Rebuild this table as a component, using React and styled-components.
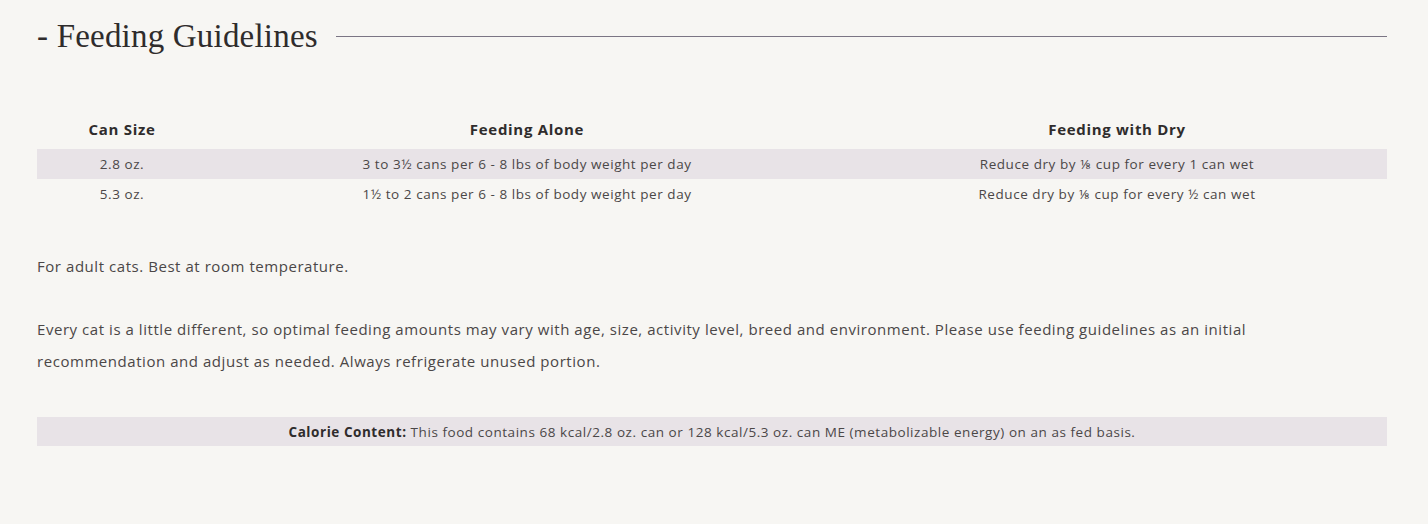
import styled, { createGlobalStyle } from 'styled-components';

const GlobalStyle = createGlobalStyle`
  body {
    margin: 0;
    background: #f7f6f3;
  }
`;

const Section = styled.section`
  box-sizing: border-box;
  width: 1428px;
  min-height: 524px;
  padding: 14px 41px 0 37px;
  background: #f7f6f3;
  font-family: "Open Sans", "Noto Sans", sans-serif;
  letter-spacing: 0.55px;
  color: #4b4747;
`;

const Heading = styled.div`
  display: flex;
  align-items: center;
  gap: 18px;
  height: 44px;

  h2 {
    margin: 0;
    font-family: "Liberation Serif", "DejaVu Serif", serif;
    font-weight: 400;
    font-size: 33px;
    letter-spacing: 0.2px;
    color: #2f2c2c;
    white-space: nowrap;
  }

  &::after {
    content: '';
    flex: 1;
    height: 1px;
    background: #7b7584;
  }
`;

const Table = styled.table`
  width: 100%;
  margin-top: 50px;
  border-collapse: collapse;
  table-layout: fixed;
  font-size: 13.5px;

  th {
    height: 41px;
    padding: 0;
    font-size: 15px;
    font-weight: 700;
    letter-spacing: 0.7px;
    color: #2f2c2c;
    vertical-align: middle;
  }

  td {
    height: 30px;
    padding: 0;
    text-align: center;
    vertical-align: middle;
  }
`;

const Row = styled.tr`
  background: ${({ shaded }) => (shaded ? '#e8e3e7' : 'transparent')};
`;

const Note = styled.p`
  max-width: 1310px;
  margin: 0;
  font-size: 15px;
  line-height: 32px;
  margin-top: ${({ top }) => top}px;
`;

const Calories = styled.div`
  margin-top: 40px;
  height: 29px;
  display: flex;
  align-items: center;
  justify-content: center;
  background: #e8e3e7;
  font-size: 13.5px;
  color: #4b4747;

  b {
    color: #2f2c2c;
  }
`;

const rows = [
  ['2.8 oz.', '3 to 3½ cans per 6 - 8 lbs of body weight per day', 'Reduce dry by ⅛ cup for every 1 can wet'],
  ['5.3 oz.', '1½ to 2 cans per 6 - 8 lbs of body weight per day', 'Reduce dry by ⅛ cup for every ½ can wet'],
];

export default function App() {
  return (
    <>
      <GlobalStyle />
      <Section>
        <Heading>
          <h2>- Feeding Guidelines</h2>
        </Heading>
        <Table>
          <colgroup>
            <col style={{ width: 170 }} />
            <col style={{ width: 640 }} />
            <col />
          </colgroup>
          <thead>
            <tr>
              <th>Can Size</th>
              <th>Feeding Alone</th>
              <th>Feeding with Dry</th>
            </tr>
          </thead>
          <tbody>
            {rows.map((r, i) => (
              <Row key={r[0]} shaded={i === 0}>
                {r.map((c) => <td key={c}>{c}</td>)}
              </Row>
            ))}
          </tbody>
        </Table>
        <Note top={41}>For adult cats. Best at room temperature.</Note>
        <Note top={31}>
          Every cat is a little different, so optimal feeding amounts may vary with age, size, activity level, breed and environment. Please use feeding guidelines as an initial recommendation and adjust as needed. Always refrigerate unused portion.
        </Note>
        <Calories>
          <span>
            <b>Calorie Content:</b> This food contains 68 kcal/2.8 oz. can or 128 kcal/5.3 oz. can ME (metabolizable energy) on an as fed basis.
          </span>
        </Calories>
      </Section>
    </>
  );
}
